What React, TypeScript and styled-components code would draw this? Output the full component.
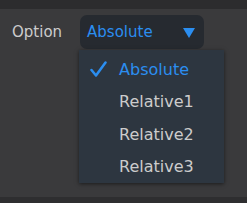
import React from "react";
import styled, { createGlobalStyle } from "styled-components";

const Global = createGlobalStyle`
  html, body { margin: 0; padding: 0; background: #3a3a3c; }
  body { font-family: "DejaVu Sans", "Open Sans", sans-serif; }
`;

const Page = styled.div`
  width: 247px;
  height: 203px;
  display: flex;
  flex-direction: column;
  background: #3a3a3c;
  overflow: hidden;
`;

const TopBar = styled.div`
  height: 9px;
  background: #2c2c2e;
  flex: none;
`;

const Body = styled.div`
  flex: 1;
  padding: 6px 0 0 12px;
`;

const BottomBar = styled.div`
  height: 6px;
  background: #2e2e30;
  flex: none;
`;

const Row = styled.div`
  display: flex;
  align-items: center;
  gap: 18px;
`;

const Label = styled.span`
  color: #cccccc;
  font-size: 15px;
`;

const SelectWrap = styled.div`
  position: relative;
`;

const SelectButton = styled.div`
  width: 124px;
  height: 34px;
  box-sizing: border-box;
  border-radius: 7px;
  background: #262a30;
  display: flex;
  align-items: center;
  justify-content: space-between;
  padding: 0 9px 0 7px;
  color: #2b8ef0;
  font-size: 15px;
`;

const Triangle = styled.span`
  width: 0;
  height: 0;
  border-left: 6px solid transparent;
  border-right: 6px solid transparent;
  border-top: 10px solid #2b8ef0;
  margin-top: 1px;
`;

const Menu = styled.div`
  position: absolute;
  left: -1px;
  top: 35px;
  width: 145px;
  height: 133px;
  box-sizing: border-box;
  padding-top: 3px;
  background: #2d3640;
  box-shadow: 0 1px 4px rgba(0, 0, 0, 0.55);
  display: flex;
  flex-direction: column;
`;

const Item = styled.div<{ $selected?: boolean }>`
  height: 32.5px;
  flex: none;
  display: flex;
  align-items: center;
  padding-left: 11px;
  gap: 12px;
  font-size: 16px;
  color: ${(p) => (p.$selected ? "#2b8ef0" : "#cccccc")};
`;

const CheckSlot = styled.span`
  width: 17px;
  height: 16px;
  display: flex;
  align-items: center;
  justify-content: center;
`;

const options = ["Absolute", "Relative1", "Relative2", "Relative3"];

export default function App() {
  const selected = "Absolute";
  return (
    <Page>
      <Global />
      <TopBar />
      <Body>
        <Row>
          <Label>Option</Label>
          <SelectWrap>
            <SelectButton>
              <span>{selected}</span>
              <Triangle />
            </SelectButton>
            <Menu>
              {options.map((o) => (
                <Item key={o} $selected={o === selected}>
                  <CheckSlot>
                    {o === selected && (
                      <svg width="17" height="16" viewBox="0 0 17 16">
                        <path
                          d="M1.5 9 L6 14.5 L15.5 1.5"
                          fill="none"
                          stroke="#2b8ef0"
                          strokeWidth="2.5"
                          strokeLinecap="round"
                          strokeLinejoin="round"
                        />
                      </svg>
                    )}
                  </CheckSlot>
                  <span>{o}</span>
                </Item>
              ))}
            </Menu>
          </SelectWrap>
        </Row>
      </Body>
      <BottomBar />
    </Page>
  );
}
